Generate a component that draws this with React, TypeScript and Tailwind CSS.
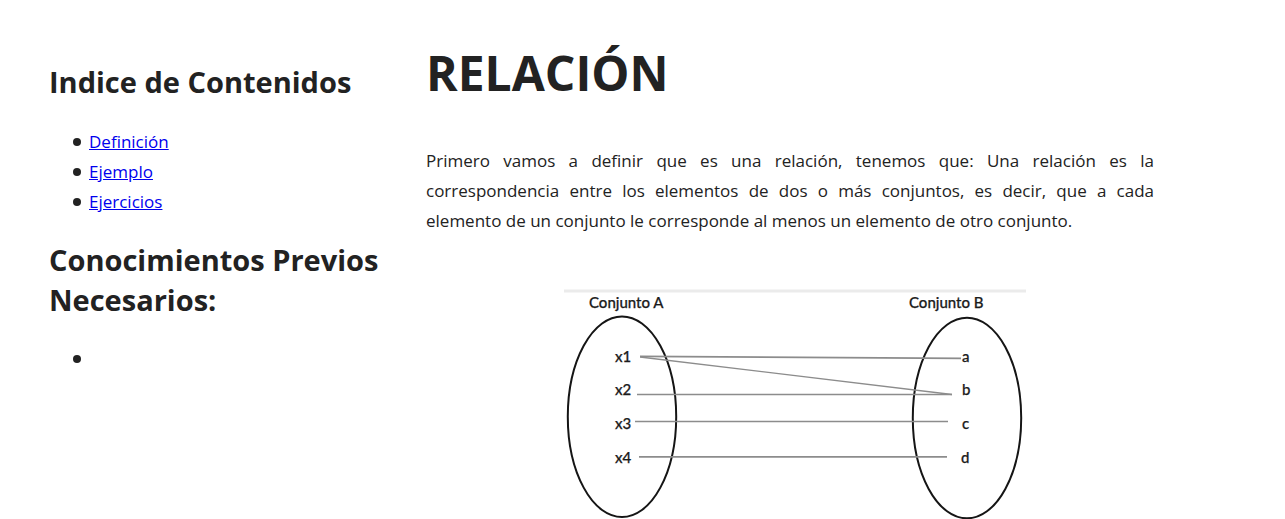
const contents = [
  { href: "#definicion", label: "Definición" },
  { href: "#ejemplo", label: "Ejemplo" },
  { href: "#ejercicios", label: "Ejercicios" },
];

const bullet =
  "flex min-h-[30px] items-center gap-2 before:size-2 before:shrink-0 before:rounded-full before:bg-[#222] before:content-['']";

function RelationDiagram() {
  return (
    <svg
      id="ejemplo"
      viewBox="0 0 462 231"
      role="img"
      aria-label="Relación entre el Conjunto A y el Conjunto B"
      className="h-auto w-full max-w-[462px]"
    >
      <path d="M0 3H462" stroke="#ebebeb" strokeWidth="3" />
      <g fill="none" stroke="#151515" strokeWidth="2">
        <ellipse cx="58" cy="128.7" rx="54.2" ry="100.3" />
        <ellipse cx="403" cy="130" rx="54.2" ry="100.3" />
      </g>
      <g fill="none" stroke="#8c8c8c" strokeWidth="1.7">
        <path d="M76 68.4L397 70.3" />
        <path d="M76 69L388 106.5" strokeWidth="1.4" />
        <path d="M73 106.5H388" />
        <path d="M71 133.5H384" />
        <path d="M75 168.8H383" />
      </g>
      <g
        fill="#1c1c1c"
        stroke="#1c1c1c"
        strokeWidth="0.25"
        className="font-['Lato',sans-serif] text-[15px] font-medium"
      >
        <text x="25" y="19.5">Conjunto A</text>
        <text x="345" y="19.5">Conjunto B</text>
        <text x="51" y="73.5">x1</text>
        <text x="51" y="107">x2</text>
        <text x="51" y="141">x3</text>
        <text x="51" y="174.5">x4</text>
        <text x="398" y="73.5">a</text>
        <text x="398" y="107">b</text>
        <text x="398" y="141">c</text>
        <text x="397" y="174.5">d</text>
      </g>
    </svg>
  );
}

export default function App() {
  return (
    <div className="flex gap-9 bg-white pt-10 pr-[131px] pl-[49px] font-['Open_Sans',sans-serif] text-[17px] leading-[30px] text-[#222]">
      <aside className="flex w-[341px] shrink-0 flex-col pt-[22px]">
        <h2 className="mb-[25px] text-[29px] leading-10 font-bold">Indice de Contenidos</h2>
        <ul className="mb-[23px] pl-6">
          {contents.map((item) => (
            <li key={item.href} className={bullet}>
              <a href={item.href} className="text-[#0000ee] underline">
                {item.label}
              </a>
            </li>
          ))}
        </ul>
        <h2 className="mb-6 text-[29px] leading-10 font-bold">Conocimientos Previos Necesarios:</h2>
        <ul className="pl-6">
          <li className={bullet} />
        </ul>
      </aside>
      <main className="min-w-0 flex-1">
        <h1 className="text-5xl leading-[66px] font-bold">RELACIÓN</h1>
        <p id="definicion" className="mt-10 text-justify">
          Primero vamos a definir que es una relación, tenemos que: Una relación es la correspondencia
          entre los elementos de dos o más conjuntos, es decir, que a cada elemento de un conjunto le
          corresponde al menos un elemento de otro conjunto.
        </p>
        <div className="mt-[52px] flex justify-center pl-[10px]">
          <RelationDiagram />
        </div>
      </main>
    </div>
  );
}
